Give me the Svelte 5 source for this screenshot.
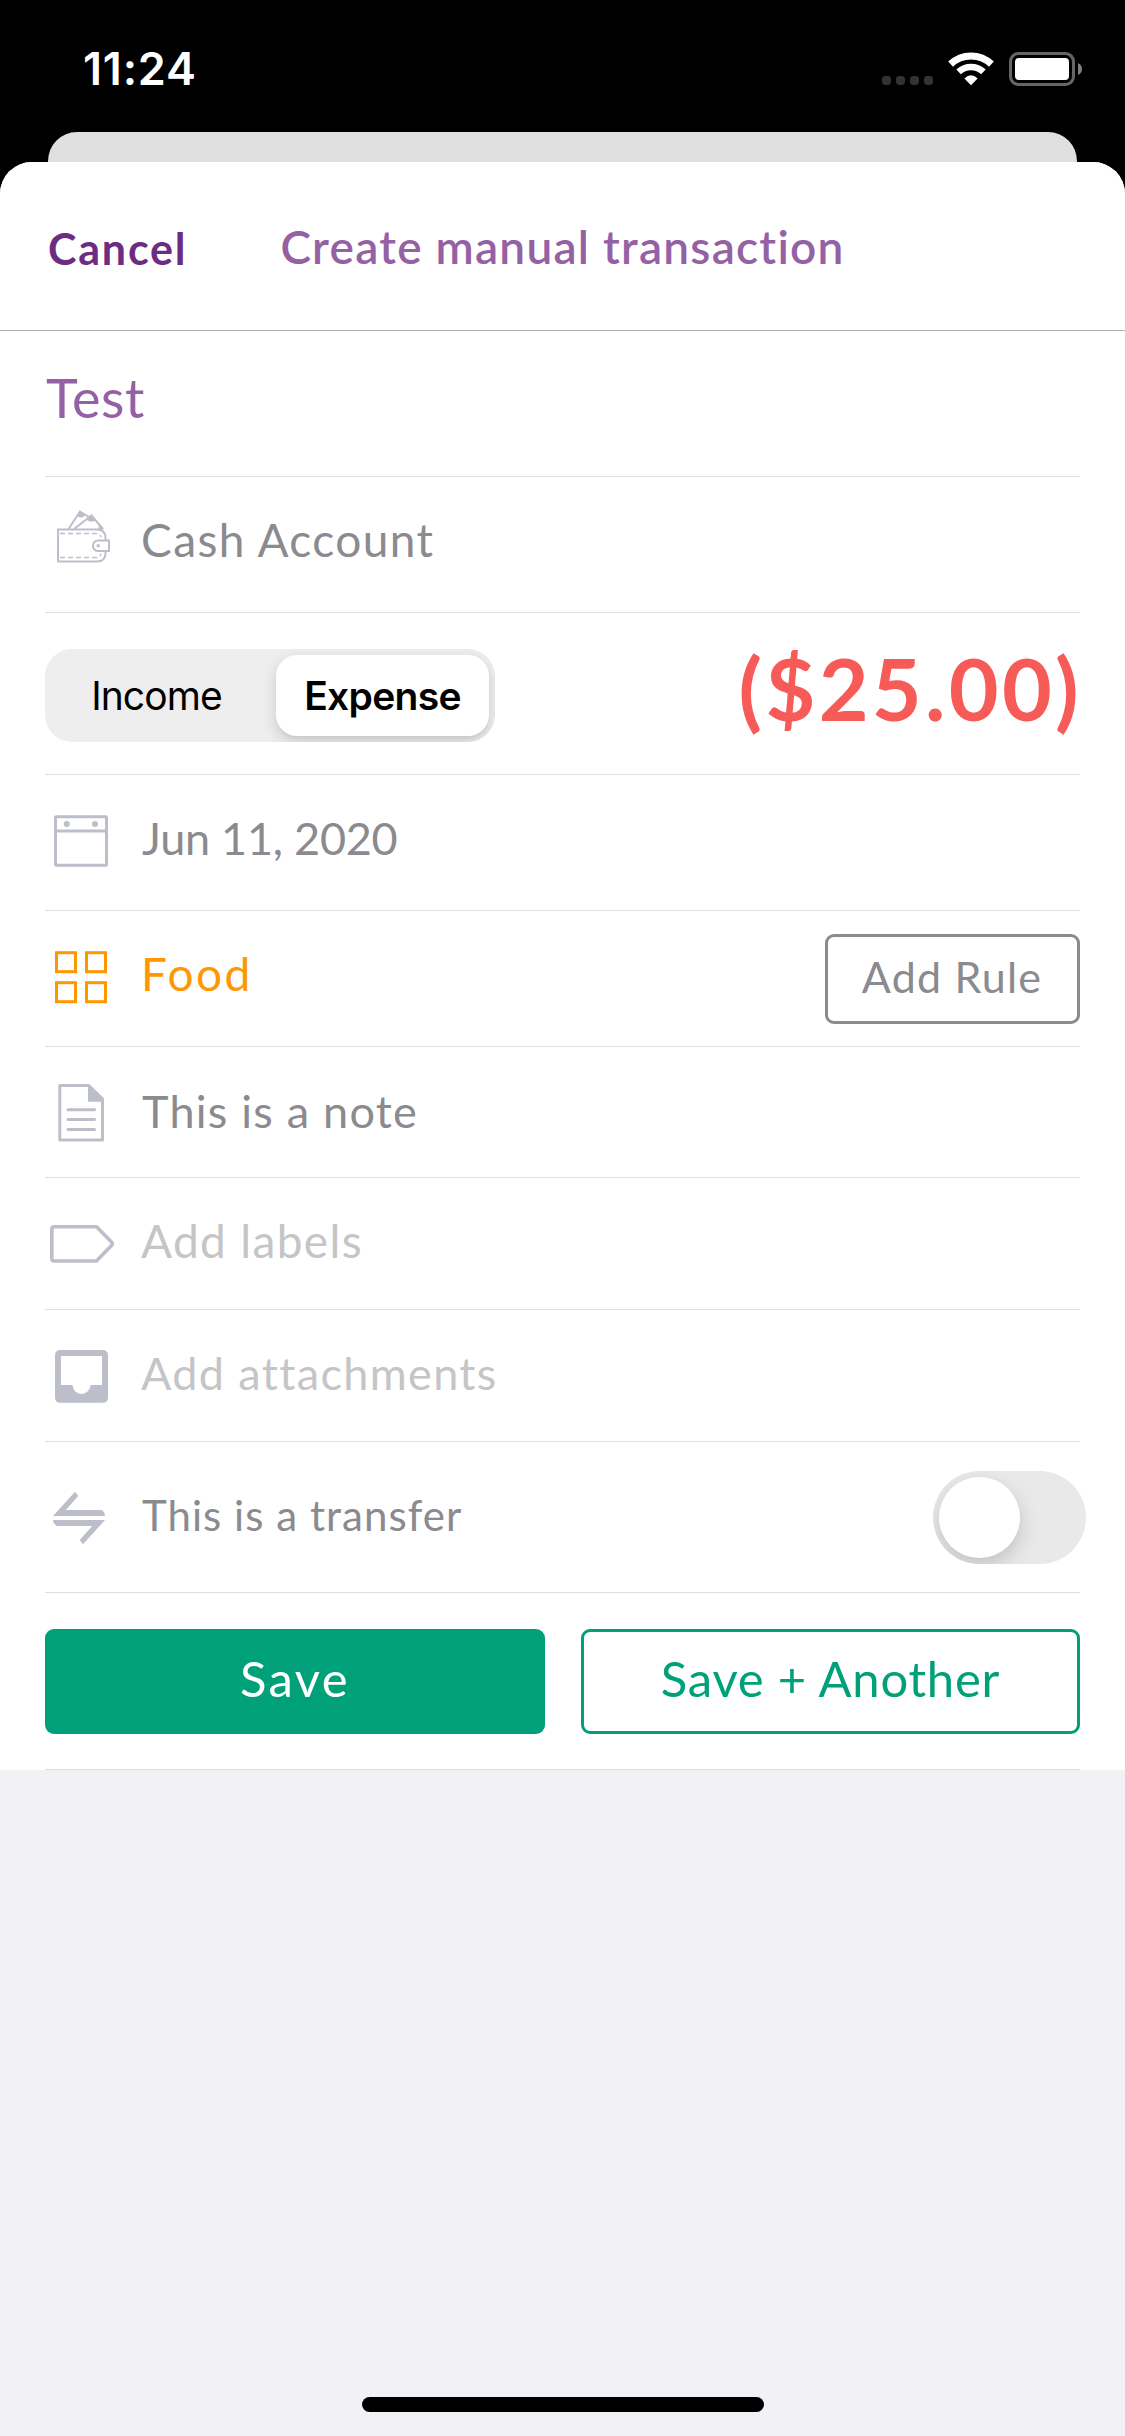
<script>
  let kind = $state('Expense');
  let transfer = $state(false);
</script>

<div class="screen">
  <header class="status">
    <span class="time">11:24</span>
    <svg class="indicators" width="201" height="34" viewBox="0 0 201 34">
      <g fill="#333">
        <rect x="0" y="24" width="9" height="9" rx="3.4" />
        <rect x="14" y="24" width="9" height="9" rx="3.4" />
        <rect x="28" y="24" width="9" height="9" rx="3.4" />
        <rect x="42" y="24" width="9" height="9" rx="3.4" />
      </g>
      <g fill="none" stroke="#fff">
        <path d="M68.6 12.1a29.5 29.5 0 0 1 40.8 0" stroke-width="7" />
        <path d="M76.6 19.9a18 18 0 0 1 24.8 0" stroke-width="6.6" />
      </g>
      <path d="M82.4 26.6q6.6-6.6 13.2 0L89 33.2z" fill="#fff" />
      <rect x="128.5" y="1.5" width="63" height="31" rx="8" fill="none" stroke="#666" stroke-width="3" />
      <rect x="133" y="6" width="54" height="22" rx="4" fill="#fff" />
      <path d="M196 11q4 2 4 6t-4 6z" fill="#808080" />
    </svg>
  </header>

  <div class="sheet-behind"></div>

  <main class="sheet">
    <nav class="bar">
      <button class="cancel">Cancel</button>
      <h1>Create manual transaction</h1>
    </nav>

    <section class="form">
      <div class="row name"><span>Test</span></div>

      <div class="row account">
        <svg class="icon" viewBox="0 0 72 135" fill="none" stroke="#bcbfc9" stroke-width="2">
          <path d="M60.500 63v-2q0-8.500-8.500-8.500H13v32h39q8.500 0 8.500-8.500v-2" />
          <path d="M15 56.500h35q5 0 6 4M15 80.500h35q5 0 6-4" stroke-width="1.300" stroke-dasharray="5 3" />
          <path d="M64 63.500H53a5 5.200 0 0 0 0 10.500h11z" />
          <circle cx="53.200" cy="68.700" r="1" stroke-width="1.500" />
          <path d="M23.500 52 35 34.500l9 5.500M29 52l17.500-13.500 11 13" />
          <path d="M35 34.500l-2.600 4.200q2.500 2.500 6 .8l1.600-1.800zM46.500 38.500l-5 3.900q3.500 3 9 1zM54.500 47l-.5 5h4.500z" fill="#bcbfc9" stroke-width="1" />
        </svg>
        <span>Cash Account</span>
      </div>

      <div class="row amount-row">
        <div class="segmented">
          <button class:selected={kind === 'Income'} onclick={() => (kind = 'Income')}>Income</button>
          <button class:selected={kind === 'Expense'} onclick={() => (kind = 'Expense')}>Expense</button>
        </div>
        <strong>($25.00)</strong>
      </div>

      <div class="row date">
        <svg class="icon" viewBox="0 0 72 135" fill="none" stroke="#bcbfc9" stroke-width="3">
          <rect x="10.500" y="41.800" width="51" height="48.500" rx="0.500" />
          <path d="M10.500 56h51" stroke-width="2.800" />
          <circle cx="21.800" cy="49" r="3" fill="#bcbfc9" stroke="none" />
          <circle cx="50" cy="49" r="3" fill="#bcbfc9" stroke="none" />
        </svg>
        <span>Jun 11, 2020</span>
      </div>

      <div class="row category">
        <svg class="icon" viewBox="0 0 72 135" fill="none" stroke="#ff9800" stroke-width="3">
          <rect x="11.500" y="41.700" width="19" height="19" />
          <rect x="41.500" y="41.700" width="19" height="19" />
          <rect x="11.500" y="71.700" width="19" height="19" />
          <rect x="41.500" y="71.700" width="19" height="19" />
        </svg>
        <span>Food</span>
        <button class="rule">Add Rule</button>
      </div>

      <div class="row note">
        <svg class="icon" viewBox="0 0 72 130" fill="none" stroke="#bcbfc9" stroke-width="3" stroke-linejoin="round">
          <path d="M14.800 38.500h29L57.500 52v41H14.800z" />
          <path d="M43 38.500v16.300h15.500V52L45 38z" fill="#bcbfc9" stroke="none" />
          <path d="M23 62.800h26.500M23 72.600h26.500M23 82.400h26.500" stroke-linecap="round" />
        </svg>
        <span>This is a note</span>
      </div>

      <div class="row labels">
        <svg class="icon" viewBox="0 0 72 131" fill="none" stroke="#bcbfc9" stroke-width="3.600" stroke-linejoin="round">
          <path d="M9 48.800h42.500L66.500 64q1.500 1.800 0 3.600L51.500 83H9q-2.200 0-2.200-2.200V51q0-2.200 2.200-2.200z" />
        </svg>
        <span>Add labels</span>
      </div>

      <div class="row attachments">
        <svg class="icon" viewBox="0 0 72 131">
          <path fill="#bcbfc9" fill-rule="evenodd" d="M15.500 40h42q5.500 0 5.500 5.500v41.700q0 5.500-5.500 5.500h-42q-5.500 0-5.500-5.500V45.500Q10 40 15.500 40zM16 46v29h11.500a9 9 0 0 0 18 0H57V46z" />
        </svg>
        <span>Add attachments</span>
      </div>

      <div class="row transfer">
        <svg class="icon" viewBox="0 0 72 150" fill="#bcbfc9">
          <path d="M30 49.700 33.300 54 20.700 68H57q3 2.500 3 6H8z" />
          <path d="M38 102.300 34.700 98 47.300 84H12q-4-2.500-4-6h52z" />
        </svg>
        <span>This is a transfer</span>
        <button class="switch" class:on={transfer} aria-label="Transfer" onclick={() => (transfer = !transfer)}>
          <i></i>
        </button>
      </div>

      <div class="row actions">
        <button class="primary">Save</button>
        <button class="secondary">Save + Another</button>
      </div>
    </section>

    <footer><div class="home"></div></footer>
  </main>
</div>

<style>
  :global(body) {
    margin: 0;
    background: #000;
  }
  .screen {
    width: 1125px;
    height: 2436px;
    display: flex;
    flex-direction: column;
    overflow: hidden;
    background: #000;
    font-family: Lato, sans-serif;
    font-size: 45px;
    color: #8a8a8f;
  }
  button {
    margin: 0;
    padding: 0;
    border: 0;
    background: none;
    font: inherit;
    letter-spacing: inherit;
    color: inherit;
    box-sizing: border-box;
  }
  .status {
    height: 132px;
    padding: 5px 42px 0 83px;
    box-sizing: border-box;
    display: flex;
    align-items: center;
    justify-content: space-between;
    color: #fff;
    font-family: Inter, sans-serif;
    font-weight: 600;
    letter-spacing: 0.8px;
  }
  .indicators {
    margin-top: 1px;
  }
  .sheet-behind {
    height: 30px;
    margin: 0 48px;
    border-radius: 29px 29px 0 0;
    background: #e0e0e0;
  }
  .sheet {
    flex: 1;
    display: flex;
    flex-direction: column;
    border-radius: 32px 32px 0 0;
    background: #f2f1f6;
    overflow: hidden;
  }
  .bar {
    height: 168px;
    display: grid;
    grid-template-columns: 232px 1fr 232px;
    align-items: center;
    border-bottom: 1px solid #b2b2b2;
    background: #fff;
  }
  .cancel {
    padding: 4px 0 0 48px;
    text-align: left;
    font-size: 43px;
    font-weight: 700;
    letter-spacing: 1.8px;
    color: #6b2c82;
  }
  h1 {
    margin: 0;
    padding-top: 1px;
    text-align: center;
    white-space: nowrap;
    font-size: 46px;
    font-weight: 600;
    letter-spacing: 1.25px;
    color: #9462a4;
  }
  .form {
    padding: 0 45px;
    background: #fff;
  }
  .row {
    display: flex;
    align-items: center;
    border-bottom: 1px solid #dcdde5;
    white-space: nowrap;
  }
  .icon {
    width: 72px;
    height: 100%;
    margin-right: 24px;
    flex: none;
  }
  .name {
    height: 145px;
    font-size: 54px;
    letter-spacing: 0.6px;
    color: #9462a4;
  }
  .name span {
    padding: 0 0 13px 1px;
  }
  .account,
  .date,
  .category {
    height: 135px;
  }
  .account span,
  .date span,
  .category span {
    padding-bottom: 10px;
  }
  .account {
    font-size: 46px;
    letter-spacing: 1.4px;
  }
  .amount-row {
    height: 161px;
    justify-content: space-between;
  }
  .segmented {
    width: 450px;
    height: 93px;
    margin-top: 4px;
    padding: 6px;
    box-sizing: border-box;
    display: grid;
    grid-template-columns: 219px 213px;
    gap: 6px;
    border-radius: 27px;
    background: #eee;
    overflow: hidden;
    font-family: Inter, sans-serif;
    font-size: 39px;
    letter-spacing: -0.9px;
    color: #000;
  }
  .segmented button:first-child {
    padding-right: 8px;
  }
  .segmented .selected {
    border-radius: 21px;
    background: #fff;
    box-shadow: 0 6px 16px rgba(0, 0, 0, 0.14), 0 3px 3px rgba(0, 0, 0, 0.04);
    font-weight: 600;
    letter-spacing: -0.7px;
  }
  strong {
    margin-right: -2px;
    padding-bottom: 12px;
    font-size: 86px;
    font-weight: 700;
    letter-spacing: 3.3px;
    color: #f75b57;
  }
  .date span {
    padding-left: 1px;
    letter-spacing: -0.25px;
  }
  .category {
    color: #ff9800;
  }
  .category span {
    font-size: 46px;
    letter-spacing: 2.4px;
  }
  .rule {
    width: 255px;
    height: 90px;
    margin: 1px 0 0 auto;
    padding: 0 1px 6px 0;
    border: 3px solid #8a8a8f;
    border-radius: 9px;
    font-size: 43px;
    letter-spacing: 1.2px;
    color: #8a8a8f;
  }
  .note {
    height: 130px;
    letter-spacing: 1.23px;
  }
  .note span {
    padding: 0 0 3px 1px;
  }
  .labels,
  .attachments {
    height: 131px;
    color: #c5c5c7;
  }
  .labels span,
  .attachments span {
    padding: 0 0 6px 0;
  }
  .labels {
    font-size: 46px;
    letter-spacing: 1.35px;
  }
  .attachments {
    letter-spacing: 1.35px;
  }
  .transfer {
    height: 150px;
    font-size: 42px;
    letter-spacing: 1.04px;
  }
  .transfer span {
    padding: 0 0 5px 1px;
  }
  .switch {
    width: 153px;
    height: 93px;
    margin: 1px -6px 0 auto;
    padding: 6px;
    display: flex;
    border-radius: 47px;
    background: #e9e9e9;
    overflow: hidden;
  }
  .switch i {
    width: 81px;
    height: 81px;
    border-radius: 50%;
    background: #fff;
    box-shadow: 0 8px 20px rgba(0, 0, 0, 0.17);
  }
  .switch.on {
    justify-content: flex-end;
    background: #00a079;
  }
  .actions {
    height: 176px;
    gap: 36px;
    font-size: 49px;
  }
  .actions button {
    height: 105px;
    padding-bottom: 6px;
    border-radius: 9px;
  }
  .actions .primary {
    width: 500px;
    background: #00a079;
    color: #fff;
    letter-spacing: 2.4px;
  }
  .actions .secondary {
    width: 499px;
    border: 3px solid #00a079;
    color: #00a079;
    letter-spacing: 0.75px;
  }
  footer {
    flex: 1;
    display: flex;
    align-items: flex-end;
    justify-content: center;
    padding-bottom: 24px;
  }
  .home {
    width: 402px;
    height: 15px;
    border-radius: 8px;
    background: #000;
  }
</style>
